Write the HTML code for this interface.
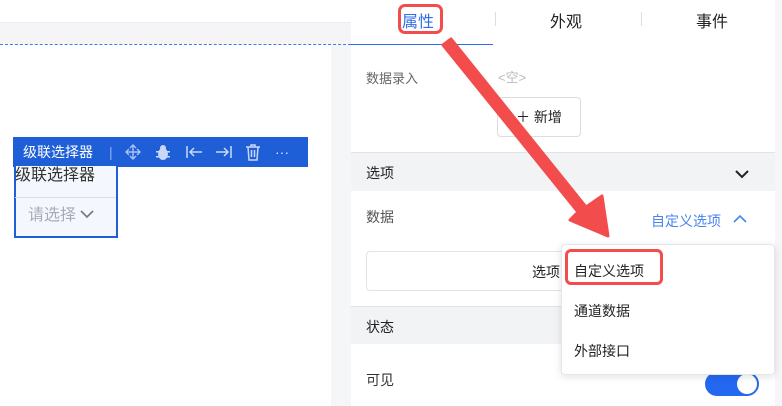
<!DOCTYPE html>
<html><head><meta charset="utf-8"><style>
*{margin:0;padding:0;box-sizing:border-box}
body{width:782px;height:406px;overflow:hidden;background:#fff;font-family:"Liberation Sans","Noto Sans CJK SC",sans-serif;position:relative;font-size:14px;color:#333}
.a{position:absolute}
</style></head><body>
<div class="a" style="left:0;top:22px;width:351px;height:22px;background:#f5f5f7;border-top:1px solid #eee"></div>
<div class="a" style="left:0;top:44px;width:351px;border-top:1px dashed #3d7cf0"></div>
<div class="a" style="left:331px;top:45px;width:20px;height:361px;background:#f5f6f8"></div>
<div class="a" style="left:775px;top:0;width:7px;height:406px;background:#f5f6f8"></div>
<!-- component -->
<div class="a" style="left:13px;top:137px;width:295px;height:30px;background:#1e5fd8;color:#fff;font-size:14px;line-height:30px">
<span class="a" style="left:10px">级联选择器</span>
<span class="a" style="left:96px;top:0;color:#8fb0ee">|</span>
<svg class="a" style="left:112px;top:7px" width="16" height="16" fill="none" stroke="#a9c2f3" stroke-width="1.4"><path d="M8 1v14M1 8h14M5 4l3-3 3 3M5 12l3 3 3-3M4 5L1 8l3 3M12 5l3 3-3 3"/></svg>
<svg class="a" style="left:141px;top:6px" width="18" height="18" fill="#c9d8f8"><ellipse cx="9" cy="11" rx="5" ry="6"/><circle cx="9" cy="5" r="3"/><path d="M2 8h14v1.5H2zM2 13h14v1.5H2z"/></svg>
<svg class="a" style="left:172px;top:8px" width="18" height="14" fill="none" stroke="#c9d8f8" stroke-width="1.5"><path d="M2 1v12M5 7h12M9 3L5 7l4 4"/></svg>
<svg class="a" style="left:202px;top:8px" width="18" height="14" fill="none" stroke="#c9d8f8" stroke-width="1.5"><path d="M16 1v12M1 7h12M9 3l4 4-4 4"/></svg>
<svg class="a" style="left:232px;top:6px" width="16" height="18" fill="none" stroke="#c9d8f8" stroke-width="1.5"><path d="M1 4h14M6 4V2h4v2M3 4l1 13h8l1-13M6.5 7v7M9.5 7v7"/></svg>
<span class="a" style="left:262px;color:#dfe8fb">···</span>
</div>
<div class="a" style="left:14px;top:166px;width:104px;height:72px;border:2px solid #1e5fd8;border-top:none;background:#f4f7fe">
<div style="font-size:16px;color:#333;height:32px;line-height:20px;border-bottom:1px solid #dde;margin-left:-1px">级联选择器</div>
<div style="font-size:16px;color:#aab;line-height:36px;padding-left:12px">请选择 <svg width="14" height="10" style="vertical-align:1px" fill="none" stroke="#777" stroke-width="1.6"><path d="M1 2l6 6 6-6"/></svg></div>
</div>
<!-- panel -->
<div class="a" style="left:351px;top:44px;width:142px;border-top:1px solid #2f6ee8"></div>
<div class="a" style="left:402px;top:8px;font-size:16px;color:#2f6ee8">属性</div>
<div class="a" style="left:398px;top:4px;width:45px;height:30px;border:3px solid #f24c4c;border-radius:7px"></div>
<div class="a" style="left:495px;top:12px;height:14px;border-left:1px solid #ddd"></div>
<div class="a" style="left:641px;top:12px;height:14px;border-left:1px solid #ddd"></div>
<div class="a" style="left:550px;top:8px;font-size:16px;color:#222">外观</div>
<div class="a" style="left:696px;top:8px;font-size:16px;color:#222">事件</div>
<div class="a" style="left:366px;top:68px;font-size:13px;color:#666">数据录入</div>
<div class="a" style="left:498px;top:67px;font-size:13px;color:#bbb">&lt;空&gt;</div>
<div class="a" style="left:497px;top:97px;width:84px;height:40px;border:1px solid #ddd;border-radius:4px;line-height:38px;text-align:center;font-size:14px;color:#222">＋ 新增</div>
<div class="a" style="left:351px;top:152px;width:424px;height:39px;background:#f2f3f5;border-top:1px solid #e3e3e6"></div>
<div class="a" style="left:366px;top:163px;font-size:14px;color:#222">选项</div>
<svg class="a" style="left:734px;top:169px" width="16" height="10"><path d="M2 2l6 6 6-6" stroke="#222" stroke-width="2" fill="none"/></svg>
<div class="a" style="left:366px;top:207px;font-size:14px;color:#555">数据</div>
<div class="a" style="left:651px;top:211px;font-size:14px;color:#4a84f0">自定义选项</div>
<svg class="a" style="left:733px;top:214px" width="14" height="10"><path d="M1 8l6-6 6 6" stroke="#4a84f0" stroke-width="1.6" fill="none"/></svg>
<div class="a" style="left:366px;top:251px;width:400px;height:40px;border:1px solid #e3e3e6;border-radius:4px"></div>
<div class="a" style="left:532px;top:262px;font-size:14px;color:#222">选项</div>
<div class="a" style="left:351px;top:306px;width:424px;height:38px;background:#f2f3f5;border-top:1px solid #e3e3e6"></div>
<div class="a" style="left:366px;top:317px;font-size:14px;color:#222">状态</div>
<div class="a" style="left:366px;top:370px;font-size:14px;color:#333">可见</div>
<div class="a" style="left:705px;top:372px;width:54px;height:24px;border-radius:12px;background:#2468f2"><div style="position:absolute;right:2px;top:2px;width:20px;height:20px;border-radius:50%;background:#fff"></div></div>
<!-- dropdown -->
<div class="a" style="left:561px;top:244px;width:214px;height:131px;background:#fff;border:1px solid #e6e6e6;border-radius:4px;box-shadow:0 2px 8px rgba(0,0,0,.12)"></div>
<div class="a" style="left:574px;top:261px;font-size:14px;color:#222">自定义选项</div>
<div class="a" style="left:565px;top:249px;width:98px;height:36px;border:3px solid #f24c4c;border-radius:6px"></div>
<div class="a" style="left:574px;top:301px;font-size:14px;color:#222">通道数据</div>
<div class="a" style="left:574px;top:341px;font-size:14px;color:#222">外部接口</div>
<!-- arrow -->
<svg class="a" style="left:0;top:0" width="782" height="406"><path d="M443 45 L451 39 L586 207 L602 196 L608 236 L570 220 L578 212 Z" fill="#f24c4c" stroke="#f24c4c" stroke-width="3" stroke-linejoin="round"/></svg>
</body></html>
